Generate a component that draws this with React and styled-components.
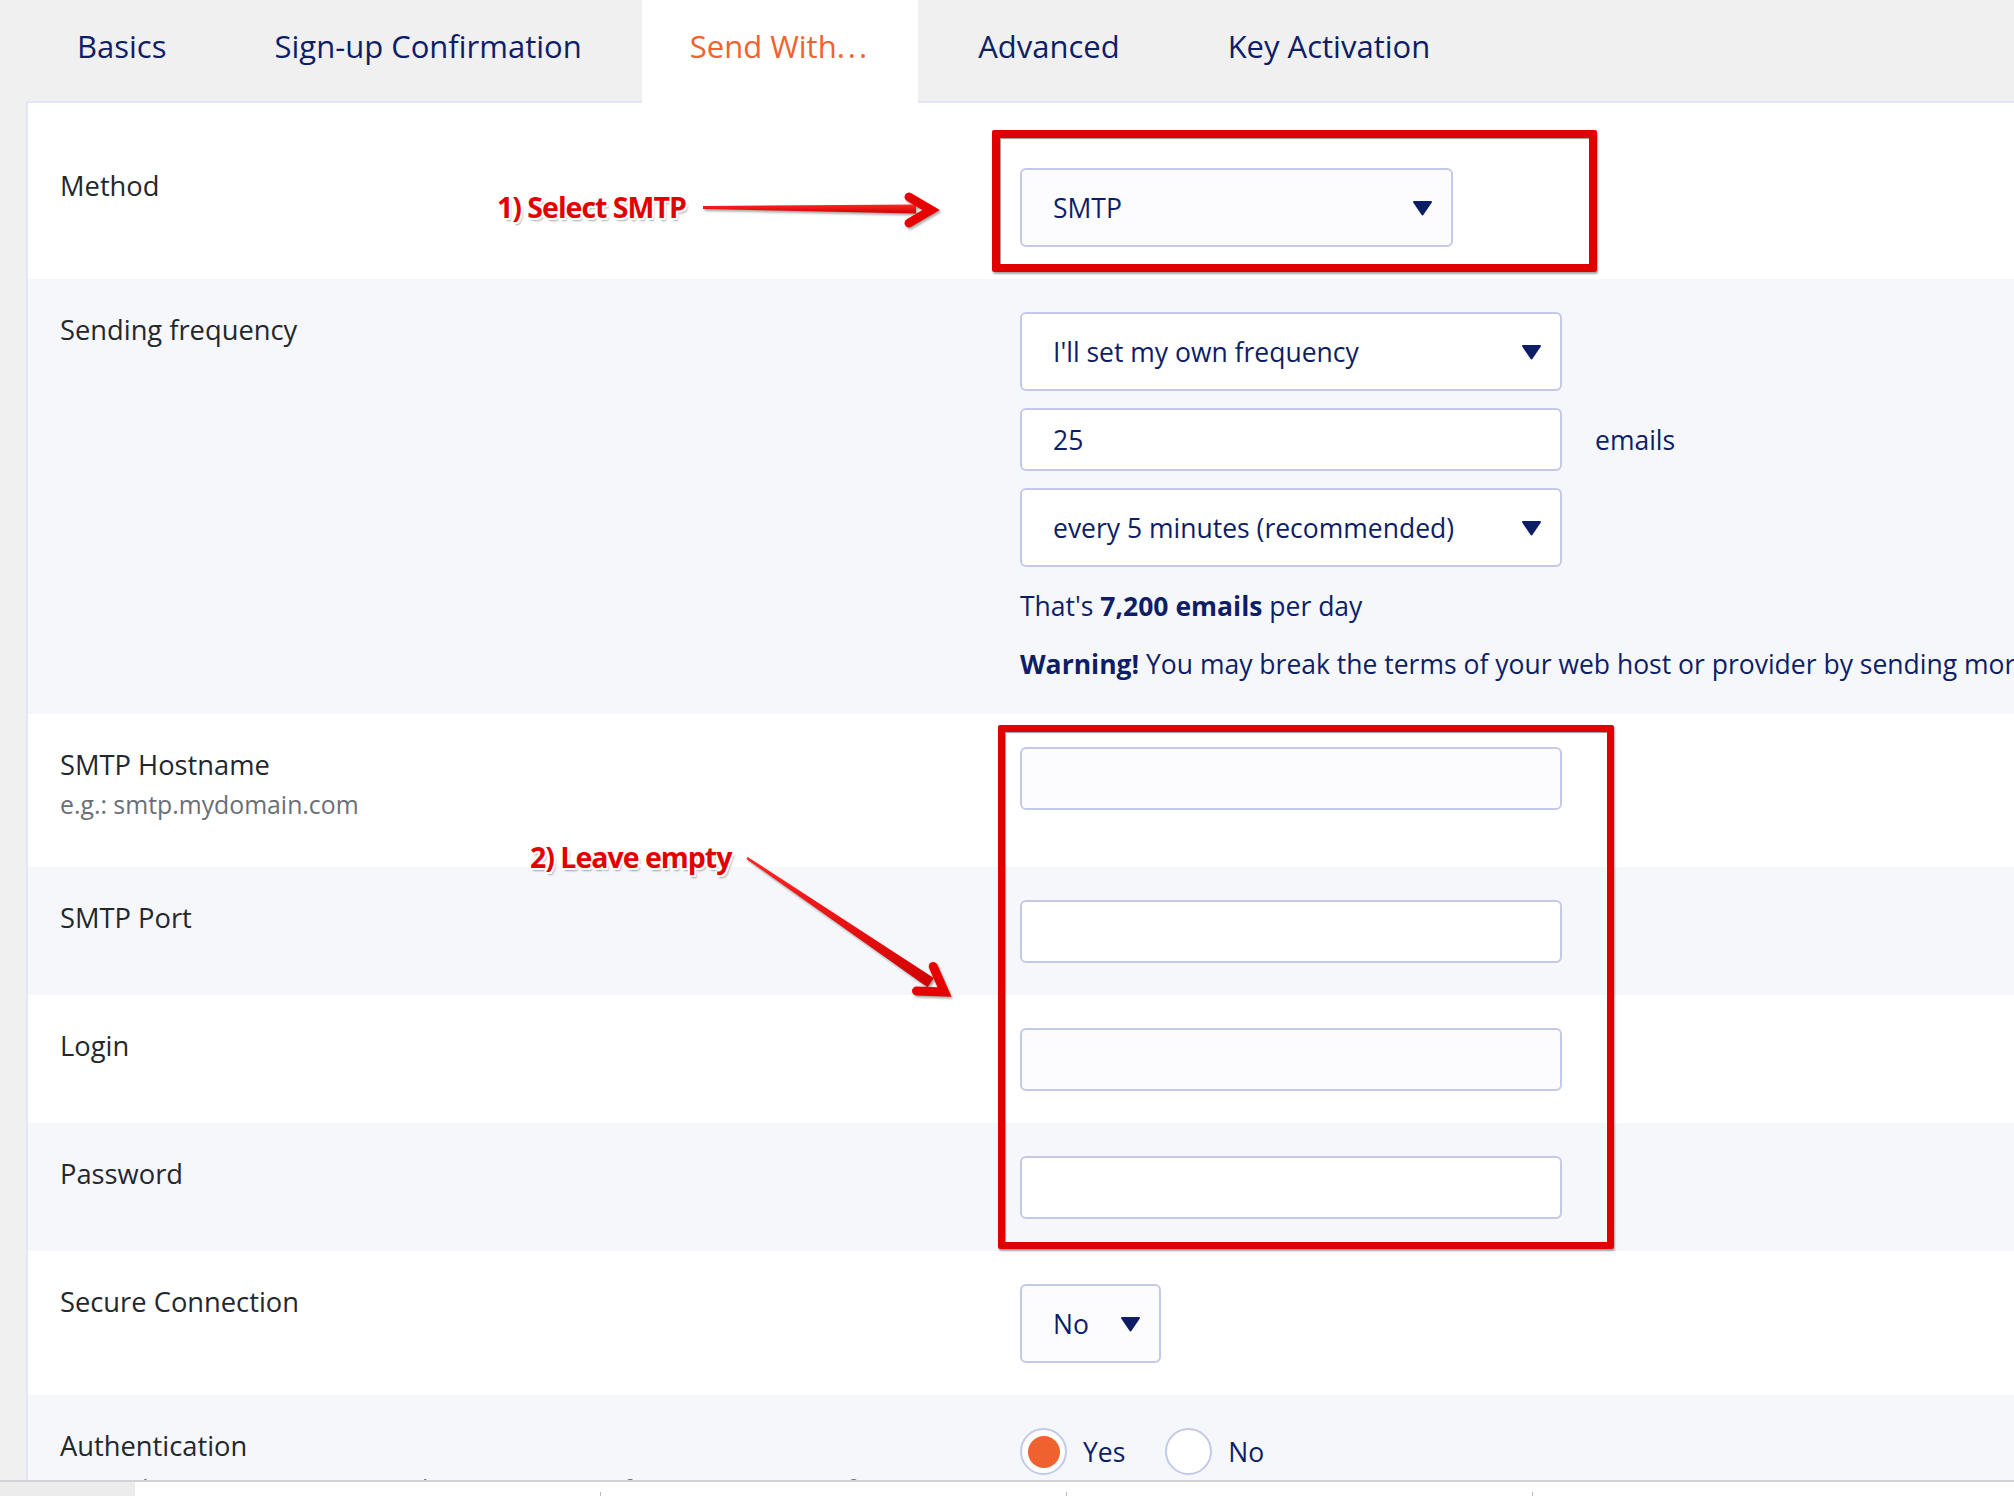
import React from "react";
import styled, { createGlobalStyle } from "styled-components";

const GlobalStyle = createGlobalStyle`
  html, body {
    margin: 0;
    padding: 0;
    background: #f0f0f0;
    overflow: hidden;
    font-family: "Open Sans", "Noto Sans", sans-serif;
  }
`;

const NAVY = "#0d1e66";

const Page = styled.div`
  width: 2014px;
  height: 1496px;
  display: flex;
  flex-direction: column;
`;

const Viewport = styled.div`
  position: relative;
  height: 1480px;
  overflow: hidden;
  background: #f0f0f0;
`;

const TabBar = styled.div`
  display: flex;
  align-items: flex-start;
  height: 101px;
  padding-left: 29px;
`;

const Tab = styled.div`
  position: relative;
  z-index: 1;
  box-sizing: border-box;
  height: ${(p) => (p.$active ? "103px" : "101px")};
  padding: 27px 48px 0;
  margin-right: 12px;
  font-size: 31px;
  line-height: 38px;
  white-space: nowrap;
  color: ${(p) => (p.$active ? "#f0622f" : NAVY)};
  background: ${(p) => (p.$active ? "#fff" : "transparent")};
`;

const Dots = styled.span`
  letter-spacing: 3px;
`;

const Panel = styled.div`
  margin-left: 26px;
  border-left: 2px solid #e3e6f5;
  border-top: 2px solid #e3e6f5;
  background: #fff;
  padding-top: 32px;
`;

const Row = styled.div`
  display: grid;
  grid-template-columns: 960px 1fr;
  padding: 33px 0 32px 32px;
  background: ${(p) => (p.$alt ? "#f6f7fb" : "#fff")};
`;

const Label = styled.div`
  font-size: 27.3px;
  line-height: 36px;
  font-weight: 500;
  color: #23282d;
`;

const Hint = styled.div`
  max-width: ${(p) => p.$maxw || "none"};
  margin-top: ${(p) => p.$mt || "3px"};
  padding-bottom: ${(p) => p.$pb || "0"};
  font-size: 24.8px;
  line-height: 36px;
  color: #6b6e76;
  white-space: ${(p) => (p.$maxw ? "normal" : "nowrap")};
`;

const Value = styled.div`
  display: flex;
  flex-direction: column;
  align-items: flex-start;
  min-width: 0;
`;

const Select = styled.div`
  box-sizing: border-box;
  width: ${(p) => p.$width}px;
  height: 79px;
  padding: 0 18px 0 31px;
  display: flex;
  align-items: center;
  justify-content: space-between;
  border: 2px solid #c3c9e9;
  border-radius: 6px;
  background: ${(p) => (p.$alt ? "#fff" : "#fcfcff")};
  font-size: 26.5px;
  color: ${NAVY};
  white-space: nowrap;
`;

const TextInput = styled.input`
  box-sizing: border-box;
  width: 542px;
  height: 63px;
  margin: 0;
  padding: 0 31px;
  border: 2px solid #c3c9e9;
  border-radius: 6px;
  background: ${(p) => (p.$alt ? "#fff" : "#fcfcff")};
  font-family: "Open Sans", "Noto Sans", sans-serif;
  font-size: 26.5px;
  color: ${NAVY};
  outline: none;
`;

const InputLine = styled.div`
  display: flex;
  align-items: center;
  gap: 33px;
  margin: 17px 0;
`;

const Unit = styled.span`
  font-size: 26.5px;
  color: ${NAVY};
`;

const Info = styled.div`
  margin-top: ${(p) => p.$mt};
  font-size: 26.5px;
  line-height: 36px;
  color: ${NAVY};
  white-space: nowrap;

  b {
    font-weight: 700;
  }
`;

const RadioGroup = styled.div`
  display: flex;
  align-items: center;
  height: 47px;
`;

const RadioCircle = styled.span`
  box-sizing: border-box;
  width: 47px;
  height: 47px;
  border-radius: 50%;
  border: 2px solid #c3c9e9;
  background: #fff;
  display: flex;
  align-items: center;
  justify-content: center;

  &::after {
    content: "";
    width: 32px;
    height: 32px;
    border-radius: 50%;
    background: ${(p) => (p.$checked ? "#ef6230" : "transparent")};
  }
`;

const RadioLabel = styled.span`
  margin: 0 40px 0 16px;
  font-size: 26.5px;
  color: ${NAVY};
`;

const RedBox = styled.div`
  position: absolute;
  top: ${(p) => p.$top}px;
  left: ${(p) => p.$left}px;
  width: ${(p) => p.$w}px;
  height: ${(p) => p.$h}px;
  box-sizing: border-box;
  border: ${(p) => p.$bw}px solid #e10000;
  border-radius: 2px;
  box-shadow: 1px 2px 2px rgba(0, 0, 0, 0.35), inset 1px 1px 1px rgba(0, 0, 0, 0.4);
  pointer-events: none;
`;

const Note = styled.span`
  position: absolute;
  top: ${(p) => p.$top}px;
  left: ${(p) => p.$left}px;
  font-family: "Open Sans", "Noto Sans", sans-serif;
  font-weight: 700;
  font-size: 28.5px;
  line-height: 29px;
  letter-spacing: -1px;
  color: #e30000;
  white-space: nowrap;
  text-shadow: -2px 0 #fff, 2px 0 #fff, 0 -2px #fff, 0 2px #fff,
    -1.5px -1.5px #fff, 1.5px 1.5px #fff, 1.5px -1.5px #fff, -1.5px 1.5px #fff,
    2px 3px 2px rgba(0, 0, 0, 0.35);
`;

const Overlay = styled.svg`
  position: absolute;
  top: 0;
  left: 0;
  pointer-events: none;
`;

const BottomStrip = styled.div`
  height: 14px;
  border-top: 2px solid #d3d3d7;
  background: #fff;
  display: flex;
  align-items: flex-end;
`;

const StripGray = styled.div`
  align-self: stretch;
  width: 135px;
  background: #ececec;
`;

const StripCell = styled.div`
  width: ${(p) => p.$w}px;
  height: 4px;
  border-right: 1px solid #b9b9bd;
`;

const Caret = () => (
  <svg width="21" height="16" viewBox="0 0 21 16">
    <path d="M2 2 H19 L10.5 14.5 Z" fill={NAVY} stroke={NAVY} strokeWidth="2" strokeLinejoin="round" />
  </svg>
);

const Arrows = () => (
  <Overlay width="2014" height="1480" viewBox="0 0 2014 1480">
    <defs>
      <linearGradient id="redGrad" x1="0" y1="0" x2="0" y2="1">
        <stop offset="0" stopColor="#ff2626" />
        <stop offset="1" stopColor="#d00000" />
      </linearGradient>
      <filter id="soft" x="-10%" y="-10%" width="120%" height="120%">
        <feGaussianBlur stdDeviation="1" />
      </filter>
    </defs>
    <g transform="translate(1.5 2)" opacity="0.45" filter="url(#soft)">
      <polygon points="703,206 916,204.5 916,213.5 703,209" fill="#444" />
      <path d="M909 197 L931 210 L909 223" fill="none" stroke="#444" strokeWidth="9" strokeLinecap="round" />
      <polygon points="746.3,859 747.7,857 933.8,978 927.6,987.2" fill="#444" />
      <path d="M933.2 966.4 L944.5 992 L916.5 991" fill="none" stroke="#444" strokeWidth="9" strokeLinecap="round" />
    </g>
    <polygon points="703,206 916,204.5 916,213.5 703,209" fill="url(#redGrad)" />
    <path d="M909 197 L931 210 L909 223" fill="none" stroke="#e60000" strokeWidth="9" strokeLinecap="round" />
    <polygon points="746.3,859 747.7,857 933.8,978 927.6,987.2" fill="url(#redGrad)" />
    <path d="M933.2 966.4 L944.5 992 L916.5 991" fill="none" stroke="#e60000" strokeWidth="9" strokeLinecap="round" />
  </Overlay>
);

export default function App() {
  return (
    <Page>
      <GlobalStyle />
      <Viewport>
        <TabBar>
          <Tab>Basics</Tab>
          <Tab>Sign-up Confirmation</Tab>
          <Tab $active>
            Send With<Dots>...</Dots>
          </Tab>
          <Tab>Advanced</Tab>
          <Tab>Key Activation</Tab>
        </TabBar>
        <Panel>
          <Row>
            <Label>Method</Label>
            <Value>
              <Select $width={433}>
                SMTP
                <Caret />
              </Select>
            </Value>
          </Row>

          <Row $alt>
            <Label>Sending frequency</Label>
            <Value>
              <Select $width={542} $alt>
                I'll set my own frequency
                <Caret />
              </Select>
              <InputLine>
                <TextInput $alt readOnly value="25" />
                <Unit>emails</Unit>
              </InputLine>
              <Select $width={542} $alt>
                every 5 minutes (recommended)
                <Caret />
              </Select>
              <Info $mt="21px">
                That's <b>7,200 emails</b> per day
              </Info>
              <Info $mt="22px">
                <b>Warning!</b> You may break the terms of your web host or provider by sending more than the recommended
                number of emails per day.
              </Info>
            </Value>
          </Row>

          <Row>
            <div>
              <Label>SMTP Hostname</Label>
              <Hint $pb="13px">e.g.: smtp.mydomain.com</Hint>
            </div>
            <Value>
              <TextInput readOnly />
            </Value>
          </Row>

          <Row $alt>
            <Label>SMTP Port</Label>
            <Value>
              <TextInput $alt readOnly />
            </Value>
          </Row>

          <Row>
            <Label>Login</Label>
            <Value>
              <TextInput readOnly />
            </Value>
          </Row>

          <Row $alt>
            <Label>Password</Label>
            <Value>
              <TextInput $alt readOnly />
            </Value>
          </Row>

          <Row>
            <Label>Secure Connection</Label>
            <Value>
              <Select $width={141}>
                No
                <Caret />
              </Select>
            </Value>
          </Row>

          <Row $alt>
            <div>
              <Label>Authentication</Label>
              <Hint $mt="6px" $maxw="830px">
                Leave this option set to Yes. Only a tiny portion of SMTP services prefer Authentication to be turned off.
              </Hint>
            </div>
            <Value>
              <RadioGroup>
                <RadioCircle $checked />
                <RadioLabel>Yes</RadioLabel>
                <RadioCircle />
                <RadioLabel>No</RadioLabel>
              </RadioGroup>
            </Value>
          </Row>
        </Panel>

        <RedBox $top={130} $left={992} $w={605} $h={142} $bw={8} />
        <RedBox $top={725} $left={998} $w={616} $h={524} $bw={7} />
        <Arrows />
        <Note $top={193} $left={497}>
          1) Select SMTP
        </Note>
        <Note $top={843} $left={530}>
          2) Leave empty
        </Note>
      </Viewport>
      <BottomStrip>
        <StripGray />
        <StripCell $w={465} />
        <StripCell $w={465} />
        <StripCell $w={465} />
      </BottomStrip>
    </Page>
  );
}
